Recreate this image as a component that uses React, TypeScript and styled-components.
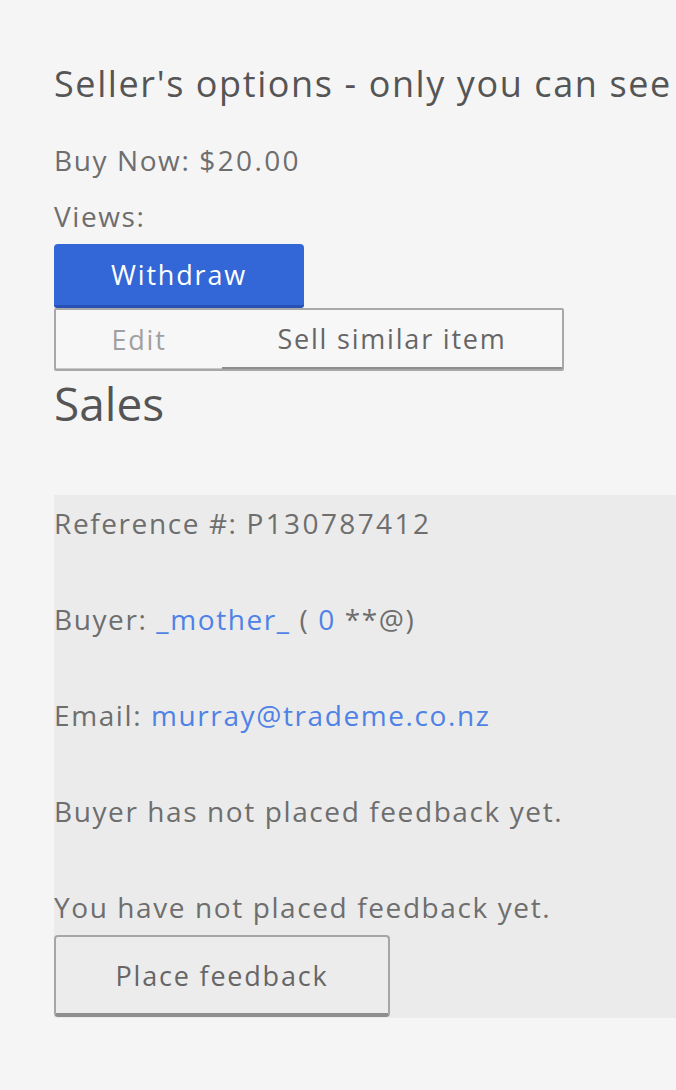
import styled, { createGlobalStyle } from "styled-components";

const GlobalStyle = createGlobalStyle`
  html, body {
    margin: 0;
    padding: 0;
    background: #f5f5f5;
    overflow: hidden;
  }
  body {
    font-family: "Open Sans", Lato, sans-serif;
    color: #6e6e6e;
    letter-spacing: 1.6px;
  }
`;

const Page = styled.div`
  width: 676px;
  height: 1090px;
  overflow: hidden;
  padding: 58px 0 0 54px;
  box-sizing: border-box;
`;

const Heading = styled.h2`
  margin: 0 0 22px;
  font-size: 36px;
  font-weight: 400;
  line-height: 52px;
  letter-spacing: 1.6px;
  color: #555;
  white-space: nowrap;
`;

const Line = styled.div`
  font-size: 28px;
  line-height: 56px;
  white-space: nowrap;
`;

const Price = styled.span`
  letter-spacing: 2.4px;
`;

const Primary = styled.button`
  display: block;
  width: 250px;
  height: 64px;
  padding: 0;
  border: none;
  border-bottom: 3px solid #2950b4;
  border-radius: 4px 4px 3px 3px;
  background: #3366d6;
  color: #fff;
  font-family: inherit;
  font-size: 27px;
  letter-spacing: 1.8px;
`;

const Group = styled.div`
  display: flex;
  width: 510px;
  height: 63px;
  box-sizing: border-box;
  border: 2px solid #a8a8a8;
  border-radius: 2px;
  background: #f7f7f7;
`;

const GroupButton = styled.button<{ $muted?: boolean; $grow?: boolean }>`
  flex: ${(p) => (p.$grow ? 1 : "0 0 166px")};
  padding: 0;
  border: none;
  border-bottom: ${(p) => (p.$muted ? "1px solid #c8c8c8" : "2px solid #8f8f8f")};
  background: transparent;
  color: ${(p) => (p.$muted ? "#a0a0a0" : "#666")};
  font-family: inherit;
  font-size: 27px;
  letter-spacing: 1.8px;
`;

const SalesTitle = styled.h1`
  margin: 0 0 60px;
  font-size: 46px;
  font-weight: 400;
  line-height: 64px;
  letter-spacing: 0;
  color: #555;
`;

const SalesBox = styled.div`
  background: #ebebeb;
  padding: 0 0 1px;
  margin-right: -20px;
`;

const SaleLine = styled.p`
  margin: 0 0 40px;
  font-size: 28px;
  line-height: 56px;
  white-space: nowrap;
  &:last-of-type {
    margin-bottom: 0;
  }
`;

const Link = styled.a`
  color: #4f82e6;
  text-decoration: none;
`;

const Secondary = styled.button`
  display: block;
  width: 336px;
  height: 82px;
  padding: 0;
  box-sizing: border-box;
  border: 2px solid #a6a6a6;
  border-bottom: 4px solid #8e8e8e;
  border-radius: 4px;
  background: #ececec;
  color: #666;
  font-family: inherit;
  font-size: 27px;
  letter-spacing: 1.8px;
`;

export default function App() {
  return (
    <>
      <GlobalStyle />
      <Page>
        <Heading>Seller's options - only you can see</Heading>
        <Line>
          Buy Now: <Price>$20.00</Price>
        </Line>
        <Line>Views:</Line>
        <Primary>Withdraw</Primary>
        <Group>
          <GroupButton $muted>Edit</GroupButton>
          <GroupButton $grow>Sell similar item</GroupButton>
        </Group>
        <SalesTitle>Sales</SalesTitle>
        <SalesBox>
          <SaleLine>
            Reference #: <Price>P130787412</Price>
          </SaleLine>
          <SaleLine>
            Buyer: <Link href="#">_mother_</Link> ( <Link href="#">0</Link> **@)
          </SaleLine>
          <SaleLine>
            Email: <Link href="#">murray@trademe.co.nz</Link>
          </SaleLine>
          <SaleLine>Buyer has not placed feedback yet.</SaleLine>
          <SaleLine>You have not placed feedback yet.</SaleLine>
          <Secondary>Place feedback</Secondary>
        </SalesBox>
      </Page>
    </>
  );
}
